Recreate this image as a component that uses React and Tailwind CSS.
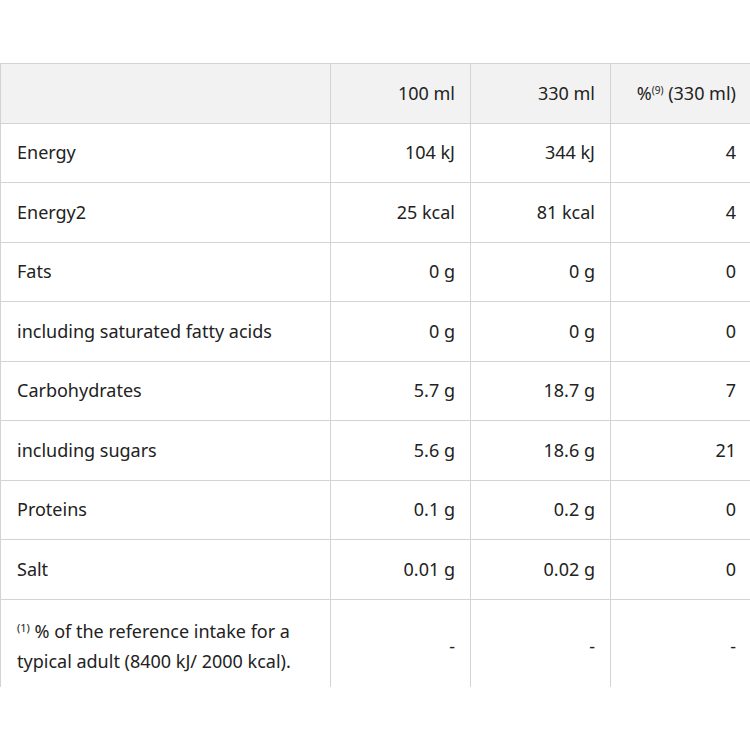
import React from 'react';

const rows = [
  ['Energy', '104 kJ', '344 kJ', '4'],
  ['Energy2', '25 kcal', '81 kcal', '4'],
  ['Fats', '0 g', '0 g', '0'],
  ['including saturated fatty acids', '0 g', '0 g', '0'],
  ['Carbohydrates', '5.7 g', '18.7 g', '7'],
  ['including sugars', '5.6 g', '18.6 g', '21'],
  ['Proteins', '0.1 g', '0.2 g', '0'],
  ['Salt', '0.01 g', '0.02 g', '0'],
];

const cell = 'border-r border-[#d3d3d3] pr-[15px] text-right align-middle';

export default function App() {
  return (
    <div className="w-[750px] h-[750px] bg-white overflow-hidden pt-[63px] font-['Noto_Sans',sans-serif] text-[18px] text-[#222]">
      <div className="h-[624px] overflow-hidden">
        <table className="w-[751px] border-collapse table-fixed">
          <colgroup>
            <col className="w-[330px]" />
            <col className="w-[140px]" />
            <col className="w-[140px]" />
            <col className="w-[141px]" />
          </colgroup>
          <thead>
            <tr className="h-[59.5px] bg-[#f2f2f2] border-y border-[#d3d3d3]">
              <th className="border-x border-[#d3d3d3]"></th>
              <th className={cell + ' font-normal'}>100 ml</th>
              <th className={cell + ' font-normal'}>330 ml</th>
              <th className={cell + ' font-normal'}>
                %<sup className="text-[10px] top-[-6px]">(9)</sup> (330 ml)
              </th>
            </tr>
          </thead>
          <tbody>
            {rows.map((r) => (
              <tr key={r[0]} className="h-[59.5px] border-b border-[#d3d3d3]">
                <td className="border-x border-[#d3d3d3] pl-[16px] align-middle">{r[0]}</td>
                <td className={cell}>{r[1]}</td>
                <td className={cell}>{r[2]}</td>
                <td className={cell}>{r[3]}</td>
              </tr>
            ))}
            <tr className="h-[94px]">
              <td className="border-x border-[#d3d3d3] pl-[16px] pr-[20px] align-middle leading-[30px]">
                <sup className="text-[11px] top-[-6px]">(1)</sup> % of the reference intake for a typical adult (8400 kJ/ 2000 kcal).
              </td>
              <td className={cell}>-</td>
              <td className={cell}>-</td>
              <td className={cell}>-</td>
            </tr>
          </tbody>
        </table>
      </div>
    </div>
  );
}
